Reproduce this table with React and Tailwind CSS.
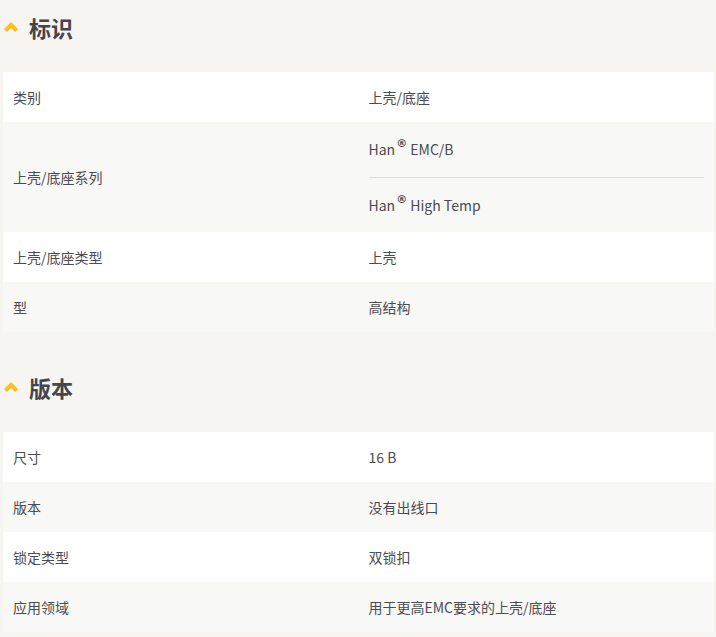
const font = { fontFamily: '"Noto Sans CJK SC", "Noto Sans", sans-serif' };

const Chevron = () => (
  <svg width="14" height="10" viewBox="0 0 14 10" className="shrink-0">
    <path d="M1.4 8.6 L7 3 L12.6 8.6" fill="none" stroke="#fcbf1e" strokeWidth="4.2" strokeLinejoin="miter" />
  </svg>
);

const Heading = ({ title }) => (
  <div className="h-[72px] flex items-start pt-[12px] pl-[1px] gap-[11px]">
    <div className="h-[30px] flex items-center"><Chevron /></div>
    <h2 className="text-[22px] leading-[30px] font-bold text-[#45454d]">{title}</h2>
  </div>
);

const Row = ({ label, values, shade }) => (
  <div className={`grid grid-cols-2 ${shade ? "bg-[#f8f8f6]" : "bg-white"}`}>
    <div className="flex items-center px-[10px] text-[14px] text-[#4b4b52]">{label}</div>
    <div className="pl-[10px] pr-[10px]">
      {values.map((v, i) => (
        <div
          key={i}
          className={`flex items-center text-[14px] text-[#4b4b52] ${values.length > 1 ? "h-[55px]" : "h-[50px]"} ${i > 0 ? "border-t border-[#dedede]" : ""}`}
        >
          {v}
        </div>
      ))}
    </div>
  </div>
);

const Han = ({ rest }) => (
  <span>
    Han<span className="inline-block align-top font-['DejaVu_Sans'] font-bold text-[11px] leading-none relative -top-[1px] ml-[1px]">®</span> {rest}
  </span>
);

export default function App() {
  const rows1 = [
    { label: "类别", values: ["上壳/底座"] },
    { label: "上壳/底座系列", values: [<Han rest="EMC/B" />, <Han rest="High Temp" />] },
    { label: "上壳/底座类型", values: ["上壳"] },
    { label: "型", values: ["高结构"] },
  ];
  const rows2 = [
    { label: "尺寸", values: ["16 B"] },
    { label: "版本", values: ["没有出线口"] },
    { label: "锁定类型", values: ["双锁扣"] },
    { label: "应用领域", values: ["用于更高EMC要求的上壳/底座"] },
  ];

  return (
    <div className="min-h-screen bg-[#f6f5f2] pl-[3px] pr-[2px]" style={font}>
      <Heading title="标识" />
      <div>
        {rows1.map((r, i) => (
          <Row key={i} label={r.label} values={r.values} shade={i % 2 === 1} />
        ))}
      </div>
      <div className="mt-[28px]">
        <Heading title="版本" />
      </div>
      <div>
        {rows2.map((r, i) => (
          <Row key={i} label={r.label} values={r.values} shade={i % 2 === 1} />
        ))}
      </div>
    </div>
  );
}
